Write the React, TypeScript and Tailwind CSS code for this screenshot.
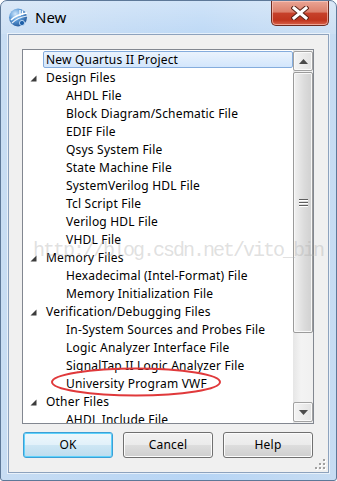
import React from "react";

type Row = { text: string; kind: "sel" | "cat" | "item" };

const rows: Row[] = [
  { text: "New Quartus II Project", kind: "sel" },
  { text: "Design Files", kind: "cat" },
  { text: "AHDL File", kind: "item" },
  { text: "Block Diagram/Schematic File", kind: "item" },
  { text: "EDIF File", kind: "item" },
  { text: "Qsys System File", kind: "item" },
  { text: "State Machine File", kind: "item" },
  { text: "SystemVerilog HDL File", kind: "item" },
  { text: "Tcl Script File", kind: "item" },
  { text: "Verilog HDL File", kind: "item" },
  { text: "VHDL File", kind: "item" },
  { text: "Memory Files", kind: "cat" },
  { text: "Hexadecimal (Intel-Format) File", kind: "item" },
  { text: "Memory Initialization File", kind: "item" },
  { text: "Verification/Debugging Files", kind: "cat" },
  { text: "In-System Sources and Probes File", kind: "item" },
  { text: "Logic Analyzer Interface File", kind: "item" },
  { text: "SignalTap II Logic Analyzer File", kind: "item" },
  { text: "University Program VWF", kind: "item" },
  { text: "Other Files", kind: "cat" },
  { text: "AHDL Include File", kind: "item" },
];

function Expander() {
  return (
    <svg width="7" height="7" viewBox="0 0 7 7" className="shrink-0">
      <polygon points="6.5,0.5 6.5,6.5 0.5,6.5" fill="#3c3c3c" />
    </svg>
  );
}

function AppIcon() {
  return (
    <svg width="21" height="21" viewBox="0 0 21 21">
      <defs>
        <radialGradient id="gl" cx="0.35" cy="0.3" r="0.8">
          <stop offset="0" stopColor="#cfe6fb" />
          <stop offset="0.45" stopColor="#5d9bd8" />
          <stop offset="1" stopColor="#1d4f8f" />
        </radialGradient>
      </defs>
      <circle cx="10" cy="10.5" r="9" fill="url(#gl)" />
      <path d="M3 13 C7 9, 12 7, 19 6" stroke="#ffffff" strokeWidth="1.6" fill="none" />
      <path d="M4 16 C8 12, 13 10, 19 9" stroke="#ffffff" strokeWidth="1.2" fill="none" opacity="0.85" />
      <path d="M12 3 L12 9 M14.5 3.5 L14.5 8" stroke="#ffffff" strokeWidth="1.3" />
      <circle cx="14" cy="16" r="2.6" fill="#1d5fa8" stroke="#d8ecff" strokeWidth="0.8" />
    </svg>
  );
}

function CloseButton() {
  return (
    <div className="w-[58px] h-[25px] rounded-b-[5px] border border-t-0 border-[#6e2a1f] flex items-center justify-center bg-[linear-gradient(to_bottom,#e9a595_0%,#dc806c_45%,#c6402a_52%,#c0351e_80%,#d9624a_100%)] shadow-[inset_0_0_0_1px_rgba(255,210,200,0.6)]">
      <svg width="18" height="14" viewBox="0 0 18 14">
        <path d="M3 2 L15 12 M15 2 L3 12" stroke="#5a2418" strokeWidth="5" strokeLinecap="square" />
        <path d="M3 2 L15 12 M15 2 L3 12" stroke="#ffffff" strokeWidth="3" strokeLinecap="square" />
      </svg>
    </div>
  );
}

function ScrollArrow({ up }: { up: boolean }) {
  return (
    <div className="h-[20px] w-full rounded-[2px] border border-[#a2a2a2] bg-[linear-gradient(to_right,#f4f4f4,#e2e2e2)] flex items-center justify-center shadow-[inset_0_0_0_1px_#fafafa]">
      <svg width="9" height="5" viewBox="0 0 9 5">
        {up ? (
          <polygon points="0,5 9,5 4.5,0" fill="#4a4a4a" />
        ) : (
          <polygon points="0,0 9,0 4.5,5" fill="#4a4a4a" />
        )}
      </svg>
    </div>
  );
}

function Button({ label, primary }: { label: string; primary?: boolean }) {
  return (
    <div
      className={
        primary
          ? "w-[90px] h-[26px] rounded-[3px] border border-[#3c9fd6] shadow-[inset_0_0_0_1px_#5fd2fb] bg-[linear-gradient(to_bottom,#eef7fc_0%,#e2f1fa_48%,#cde6f4_52%,#bddcee_100%)] flex items-center justify-center text-[12px] tracking-[0.2px] text-black"
          : "w-[90px] h-[26px] rounded-[3px] border border-[#707070] shadow-[inset_0_0_0_1px_#fcfcfc] bg-[linear-gradient(to_bottom,#f2f2f2_0%,#ebebeb_48%,#dddddd_52%,#cfcfcf_100%)] flex items-center justify-center text-[12px] tracking-[0.2px] text-black"
      }
    >
      {label}
    </div>
  );
}

export default function App() {
  return (
    <div
      className="w-[337px] h-[481px] relative overflow-hidden rounded-t-[7px] rounded-b-[3px] border border-[#5d7898] bg-[linear-gradient(to_right,#c8ddf3_0%,#bcd7f4_40%,#b7d5f5_60%,#c7dcf2_100%)] flex flex-col text-black"
      style={{ fontFamily: '"Noto Sans", "Open Sans", sans-serif' }}
    >
      {/* title bar */}
      <div className="h-[33px] flex items-start shrink-0 bg-[linear-gradient(to_bottom,rgba(255,255,255,0.35),rgba(255,255,255,0.1))]">
        <div className="ml-[7px] mt-[6px]">
          <AppIcon />
        </div>
        <div className="ml-[6px] mt-[6px] text-[15px] leading-[20px]" style={{ fontFamily: '"Noto Sans", sans-serif' }}>
          New
        </div>
        <div className="ml-auto mr-[7px]">
          <CloseButton />
        </div>
      </div>

      {/* client */}
      <div className="mx-[7px] mb-[7px] flex-1 border border-[#8da2bd] bg-[#f0f0f0] flex flex-col pl-[13px] pr-[14px] pt-[14px] shadow-[0_0_0_1px_rgba(255,255,255,0.6)]">
        <div className="h-[375px] border border-[#828790] bg-white flex">
          <div className="flex-1 overflow-hidden tracking-[0.2px]">
            {rows.map((r, i) => {
              if (r.kind === "sel") {
                return (
                  <div key={i} className="h-[18px] pl-[20px]">
                    <div className="mt-[1px] h-[17px] rounded-[2px] border border-[#84acdd] bg-[linear-gradient(to_bottom,#eaf3fd,#d3e6fc)] pl-[2px] flex items-center text-[12px] leading-none whitespace-nowrap">
                      {r.text}
                    </div>
                  </div>
                );
              }
              if (r.kind === "cat") {
                return (
                  <div key={i} className="h-[18px] flex items-center pl-[7px] text-[12px] whitespace-nowrap">
                    <Expander />
                    <span className="ml-[9px]">{r.text}</span>
                  </div>
                );
              }
              return (
                <div key={i} className="h-[18px] flex items-center pl-[43px] text-[12px] whitespace-nowrap">
                  {r.text}
                </div>
              );
            })}
          </div>
          <div className="w-[20px] shrink-0 flex flex-col py-[1px] bg-[linear-gradient(to_right,#e6e6e6,#f3f3f3_40%,#f0f0f0)]">
            <ScrollArrow up />
            <div className="mt-[1px] h-[261px] rounded-[2px] border border-[#9b9b9b] bg-[linear-gradient(to_right,#f1f1f1,#dcdcdc_55%,#d0d0d0)] flex items-center justify-center shadow-[inset_0_0_0_1px_#f8f8f8]">
              <svg width="9" height="8" viewBox="0 0 9 8">
                <path d="M0 0.5 H9 M0 3.5 H9 M0 6.5 H9" stroke="#5e5e5e" strokeWidth="1" />
                <path d="M0 1.5 H9 M0 4.5 H9 M0 7.5 H9" stroke="#ffffff" strokeWidth="1" />
              </svg>
            </div>
            <div className="mt-auto">
              <ScrollArrow up={false} />
            </div>
          </div>
        </div>

        <div className="mt-[8px] ml-[1px] flex gap-[10px]">
          <Button label="OK" primary />
          <Button label="Cancel" />
          <Button label="Help" />
        </div>

        <div className="flex-1 flex justify-end items-end -mr-[12px] pb-[2px]">
          <svg width="11" height="11" viewBox="0 0 11 11">
            {[
              [8, 0],
              [4, 4],
              [8, 4],
              [0, 8],
              [4, 8],
              [8, 8],
            ].map(([x, y], i) => (
              <g key={i}>
                <rect x={x + 1} y={y + 1} width="2" height="2" fill="#ffffff" />
                <rect x={x} y={y} width="2" height="2" fill="#a0a0a0" />
              </g>
            ))}
          </svg>
        </div>
      </div>

      {/* watermark overlay */}
      <div
        className="absolute left-[32px] top-[238px] text-[20px] leading-[24px] tracking-[-2px] text-[rgba(175,175,175,0.4)] whitespace-nowrap pointer-events-none"
        style={{ fontFamily: '"Liberation Mono", monospace' }}
      >
        http://blog.csdn.net/vito_bin
      </div>

      {/* red annotation ellipse */}
      <svg className="absolute left-0 top-0 pointer-events-none" width="337" height="481" viewBox="0 0 337 481">
        <ellipse cx="135" cy="381" rx="84" ry="13.5" fill="none" stroke="#e0393b" strokeWidth="2" />
      </svg>
    </div>
  );
}
